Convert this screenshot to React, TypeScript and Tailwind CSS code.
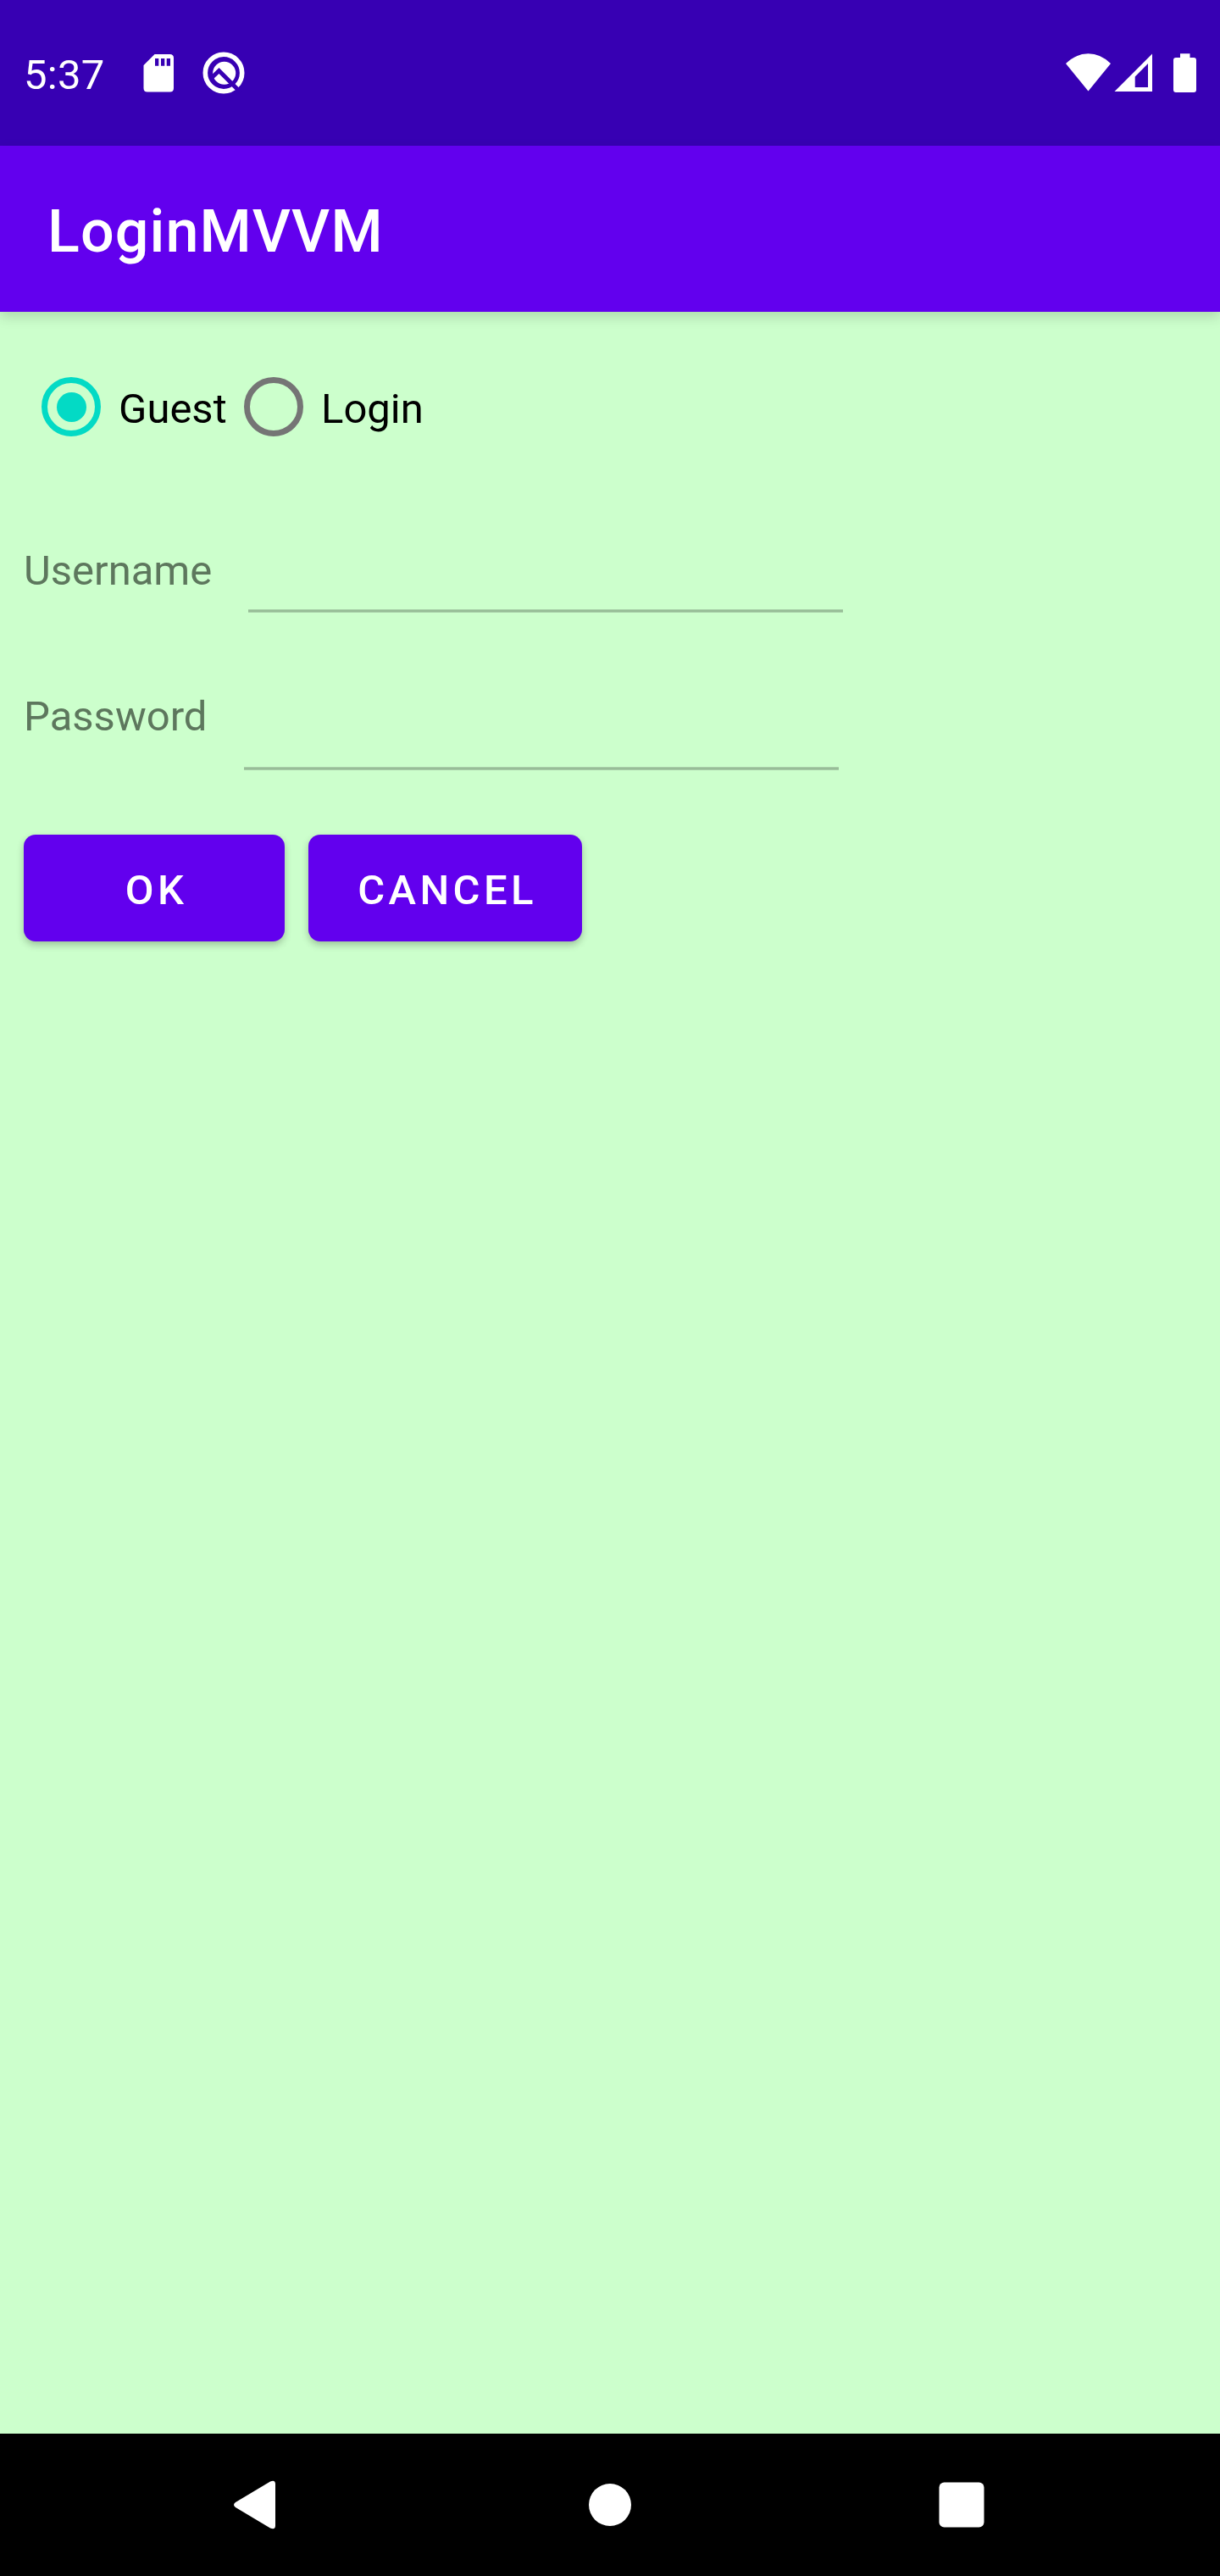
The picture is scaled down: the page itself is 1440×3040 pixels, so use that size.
import React from "react";

function SdCard() {
  return (
    <svg className="ml-[47px] block h-[45px] w-[36px]" viewBox="169 64 36 45" fill="#fff">
      <path
        fillRule="evenodd"
        d="M182.500 64H200.500Q205 64 205 68.500V104Q205 108.500 200.500 108.500H174Q169.500 108.500 169.500 104V77ZM183 69V77.700H187.300V69ZM190 69V77.700H194.300V69ZM196.700 69V77.700H201V69Z"
      />
    </svg>
  );
}

function QLogo() {
  return (
    <svg className="ml-[34px] block h-[50px] w-[50px]" viewBox="239 61 50 50">
      <circle cx="264" cy="86" r="21.700" fill="none" stroke="#fff" strokeWidth="5.600" />
      <circle cx="264.700" cy="86.200" r="13.500" fill="#fff" />
      <path d="M249 92.500L258.500 83.500L284 109" fill="none" stroke="#3700b3" strokeWidth="5" />
    </svg>
  );
}

function Signals() {
  return (
    <svg className="block h-[46px] w-[156px]" viewBox="1257 63 156 46" fill="#fff">
      <path d="M1258 75Q1270 63.300 1284.500 63.300T1311 75L1284.500 107.500Z" />
      <path fillRule="evenodd" d="M1360 63.500V108H1315.500ZM1355 75L1339.700 90.500V103H1355Z" />
      <path d="M1393 63.300H1404.500V68H1409Q1412 68 1412 71V106Q1412 109 1409 109H1388Q1385 109 1385 106V71Q1385 68 1388 68H1393Z" />
    </svg>
  );
}

function Radio({ label, checked, ring }: { label: string; checked?: boolean; ring: string }) {
  return (
    <label className="flex items-center">
      <span className={`flex size-[70px] shrink-0 items-center justify-center rounded-full border-7 ${ring}`}>
        {checked && <span className="size-[35px] rounded-full bg-[#03dac5]" />}
      </span>
      <span className="ml-[21px] pt-1.5 text-black">{label}</span>
    </label>
  );
}

function Field({ label, labelWidth, height }: { label: string; labelWidth: string; height: string }) {
  return (
    <div className={`flex pl-7 text-[#5d775d] ${height}`}>
      <span className={`pt-px ${labelWidth}`}>{label}</span>
      <span className="h-1 w-[702px] self-end border-y border-[#a8cfa8] bg-[#97bd97]" />
    </div>
  );
}

function ActionButton({ label, width }: { label: string; width: string }) {
  return (
    <button
      className={`h-[126px] rounded-[14px] bg-[#6200ee] pt-[5px] pl-[5px] font-medium tracking-[4.375px] text-white shadow-[0_4px_9px_rgba(0,0,0,0.24)] ${width}`}
    >
      {label}
    </button>
  );
}

export default function App() {
  return (
    <div className="flex h-[3040px] w-[1440px] flex-col overflow-hidden bg-[#ccffcc] font-['Roboto',sans-serif] text-[49px] leading-[58px]">
      <div className="flex h-[172px] shrink-0 items-center bg-[#3700b3] pr-[27px] pl-7 text-white">
        <span className="w-[94px] pt-1.5 tracking-[0.3px] whitespace-nowrap">5:37</span>
        <SdCard />
        <QLogo />
        <div className="ml-auto">
          <Signals />
        </div>
      </div>
      <header className="flex h-[196px] shrink-0 items-center bg-[#6200ee] pt-1.5 pl-14 shadow-[0_6px_14px_rgba(0,0,0,0.15)]">
        <h1 className="text-[70px] leading-[82px] font-medium tracking-[1.1px] text-white">LoginMVVM</h1>
      </header>

      <main className="flex flex-1 flex-col">
        <div className="mt-[77px] flex h-[70px] pl-[49px]">
          <div className="w-[239px]">
            <Radio label="Guest" checked ring="border-[#03dac5]" />
          </div>
          <Radio label="Login" ring="border-[#757575]" />
        </div>

        <div className="mt-[129px]">
          <Field label="Username" labelWidth="w-[265px]" height="h-[79px]" />
        </div>
        <div className="mt-[93px]">
          <Field label="Password" labelWidth="w-[260px]" height="h-[93px]" />
        </div>

        <div className="mt-[76px] flex gap-7 pl-7">
          <ActionButton label="OK" width="w-[308px]" />
          <ActionButton label="CANCEL" width="w-[323px]" />
        </div>
      </main>

      <nav className="flex h-[168px] shrink-0 items-center bg-black">
        <svg className="ml-[276px] block h-[58px] w-[50px]" viewBox="276 2927 50 58" fill="#fff">
          <path d="M319 2928.500Q325 2926 325 2931.500V2980.500Q325 2986 319 2983.500L278 2959Q274 2956 278 2953Z" />
        </svg>
        <span className="ml-[369px] size-[50px] rounded-full bg-white" />
        <svg className="ml-[363px] block size-[54px]" viewBox="0 0 54 54" fill="#fff">
          <rect x="0.500" y="0.500" width="53" height="53" rx="6" />
        </svg>
      </nav>
    </div>
  );
}
